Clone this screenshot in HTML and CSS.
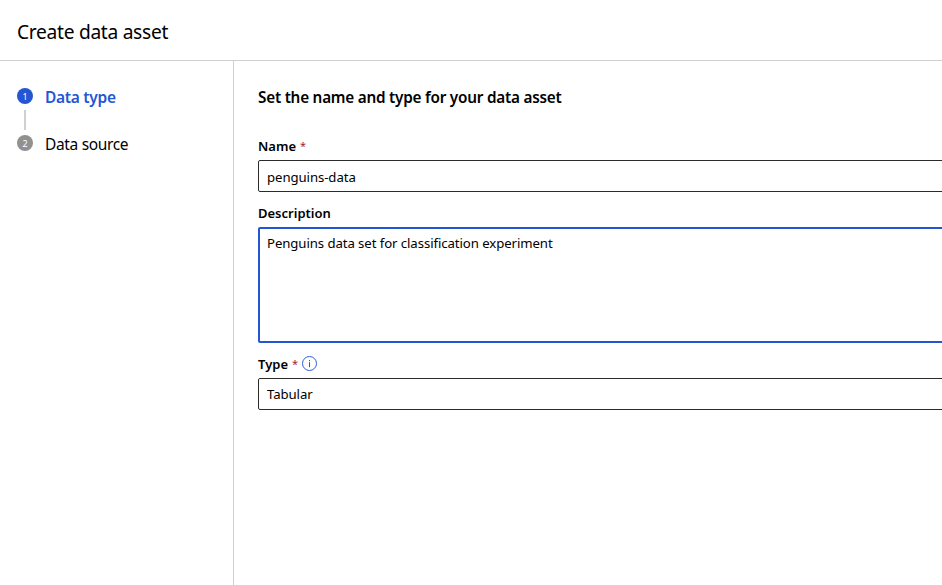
FILE: index.html
```html
<!DOCTYPE html>
<html lang="en">
<head>
<meta charset="utf-8">
<title>Create data asset</title>
<link rel="stylesheet" href="styles.css">
</head>
<body>
<header class="header"><h1>Create data asset</h1></header>
<div class="layout">
  <nav class="steps">
    <div class="step active"><span class="badge"><svg width="16" height="16" viewBox="0 0 16 16"><circle cx="8" cy="8" r="8" fill="#2456d3"/><text x="8" y="11.5" text-anchor="middle">1</text></svg></span><span class="step-name">Data type</span></div>
    <div class="connector"></div>
    <div class="step"><span class="badge"><svg width="16" height="16" viewBox="0 0 16 16"><circle cx="8" cy="8" r="8" fill="#919191"/><text x="8" y="11.5" text-anchor="middle">2</text></svg></span><span class="step-name">Data source</span></div>
  </nav>
  <main class="form">
    <h2>Set the name and type for your data asset</h2>
    <div class="label label-name">Name <span class="req">*</span></div>
    <div class="field">penguins-data</div>
    <div class="label label-desc">Description</div>
    <div class="field area">Penguins data set for classification experiment</div>
    <div class="label label-type">Type <span class="req">*</span><svg class="info" width="16" height="16" viewBox="0 0 16 16"><circle cx="7.5" cy="7.5" r="7" fill="none" stroke="#2b5fdc"/><path d="M7.5 6.2v5M7.5 4v1.2" stroke="#2456d3"/></svg></div>
    <div class="field type">Tabular</div>
  </main>
</div>
</body>
</html>
```
FILE: styles.css
```css
* { box-sizing: border-box; }
body { margin: 0; height: 585px; overflow: hidden; display: flex; flex-direction: column; background: #fff; color: #000; font-family: "Noto Sans", "Open Sans", sans-serif; }
.header { height: 61px; flex: none; border-bottom: 1px solid #d0d0d0; padding: 17px 17px 0; }
h1 { margin: 0; font-size: 19.2px; line-height: 30px; font-weight: 400; letter-spacing: -.3px; }
.layout { display: flex; flex: 1; }
.steps { width: 234px; flex: none; border-right: 1px solid #d0d0d0; padding: 24px 17px; }
.step { display: flex; height: 24px; align-items: flex-start; }
.badge { width: 28px; padding-top: 3px; line-height: 0; }
.badge text { font-size: 9px; fill: #fff; }
.step-name { font-size: 15.5px; line-height: 25px; letter-spacing: -.34px; }
.active .step-name { color: #2456d3; font-weight: 600; letter-spacing: -.3px; }
.connector { width: 2px; height: 20px; margin: 1px 0 2px 7px; background: #d0d0d0; }
.form { flex: 1; padding: 24px 0 0 24px; white-space: nowrap; overflow: hidden; }
h2 { margin: 0 0 26px; font-size: 15.3px; line-height: 25px; font-weight: 600; letter-spacing: -.23px; }
.label { font-size: 13px; line-height: 20px; font-weight: 600; display: flex; align-items: center; }
.req { color: #a4262c; margin-left: 4px; font-size: 11px; font-weight: 400; }
.field { width: 760px; height: 32px; margin-top: 4px; padding: 0 8px; border: 1px solid #2b2b2b; border-radius: 2px; font-size: 13.2px; line-height: 32px; letter-spacing: -.08px; }
.label-desc { margin-top: 11px; }
.area { height: 116px; border: 2px solid #2456d3; padding: 4px 7px; line-height: 20px; }
.label-type { margin-top: 11px; }
.info { margin-left: 4px; }
.type { line-height: 30px; }
```
